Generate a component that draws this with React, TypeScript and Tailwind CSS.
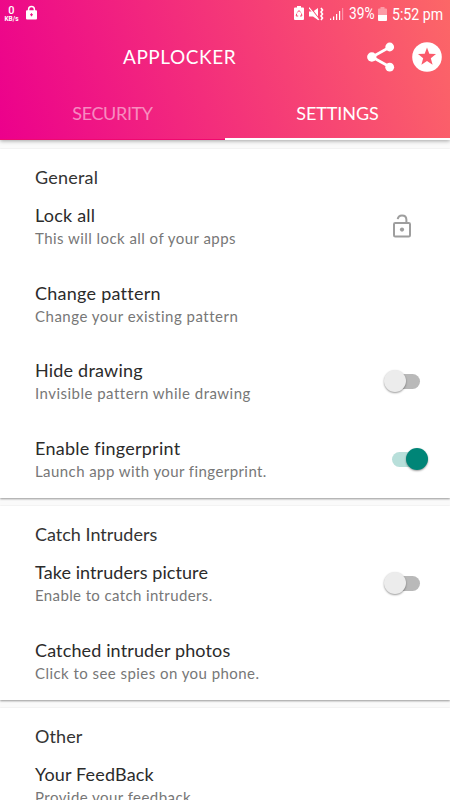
import type { ReactNode } from "react";

type Item = {
  title: string;
  titleClass: string;
  note: string;
  noteClass: string;
  control?: ReactNode;
};

function Toggle({ on = false }: { on?: boolean }) {
  return on ? (
    <span className="relative mt-px mr-[23px] block h-[15px] w-[35px] rounded-full bg-[#b8dfda]">
      <span className="absolute -top-[4px] left-[14px] size-[22px] rounded-full bg-[#008577] shadow-[0_1px_2px_rgba(0,0,0,0.4)]" />
    </span>
  ) : (
    <span className="relative mt-px mr-[30px] block h-[15px] w-[35px] rounded-full bg-[#b9b9b9]">
      <span className="absolute -top-[4px] -left-[1px] size-[22px] rounded-full bg-[#ececec] shadow-[0_1px_2px_rgba(0,0,0,0.4)]" />
    </span>
  );
}

function OpenLock() {
  return (
    <svg className="mr-[36px] mb-[2px] h-[27px] w-[24px]" viewBox="0 0 24 27" fill="none" stroke="#9e9e9e" strokeWidth="2">
      <rect x="4" y="11" width="16" height="13.5" rx="1.2" />
      <path d="M7.7 7.2C8 4.8 9.7 3.4 12 3.4c2.7 0 4.4 1.8 4.4 4.4V11" />
      <circle cx="12" cy="17.6" r="2.1" fill="#9e9e9e" stroke="none" />
    </svg>
  );
}

const general: Item[] = [
  { title: "Lock all", titleClass: "tracking-[0.2px]", note: "This will lock all of your apps", noteClass: "tracking-[0.45px]", control: <OpenLock /> },
  { title: "Change pattern", titleClass: "tracking-[0.25px]", note: "Change your existing pattern", noteClass: "tracking-[0.5px]" },
  { title: "Hide drawing", titleClass: "tracking-[0.2px]", note: "Invisible pattern while drawing", noteClass: "tracking-[0.48px]", control: <Toggle /> },
  { title: "Enable fingerprint", titleClass: "tracking-[0.25px]", note: "Launch app with your fingerprint.", noteClass: "tracking-[0.42px]", control: <Toggle on /> },
];

const intruders: Item[] = [
  { title: "Take intruders picture", titleClass: "tracking-[0.08px]", note: "Enable to catch intruders.", noteClass: "tracking-[0.38px]", control: <Toggle /> },
  { title: "Catched intruder photos", titleClass: "tracking-[0.13px]", note: "Click to see spies on you phone.", noteClass: "tracking-[0.45px]" },
];

const other: Item[] = [
  { title: "Your FeedBack", titleClass: "tracking-[0.15px]", note: "Provide your feedback", noteClass: "tracking-[0.45px]" },
];

function Section({ title, titleClass, items }: { title: string; titleClass: string; items: Item[] }) {
  return (
    <section className="bg-white shadow-[0_1px_2px_rgba(0,0,0,0.4)]">
      <h2 className="h-[38.5px] pt-[16px] pl-[35px] text-[18px] leading-[24px] text-[#333]">
        <span className={titleClass}>{title}</span>
      </h2>
      {items.map((item) => (
        <div key={item.title} className="flex h-[77.5px] items-center justify-between">
          <div className="pl-[35px]">
            <h3 className="text-[18px] leading-[24px] whitespace-nowrap text-[#2b2b2b]">
              <span className={item.titleClass}>{item.title}</span>
            </h3>
            <p className="text-[15px] leading-[22px] whitespace-nowrap text-[#777]">
              <span className={item.noteClass}>{item.note}</span>
            </p>
          </div>
          {item.control}
        </div>
      ))}
    </section>
  );
}

function StatusBar() {
  return (
    <div className="flex h-[27px] items-center justify-between pr-[8px] pl-[4px] font-['Roboto',sans-serif]">
      <div className="flex items-center gap-[7px]">
        <div className="flex w-[15px] flex-col items-center">
          <span className="text-[11px] leading-[11px] font-medium">0</span>
          <span className="text-[6.5px] leading-[7px] font-bold">KB/s</span>
        </div>
        <svg className="mb-[2px] h-[15px] w-[11px]" viewBox="0 0 11 15">
          <path d="M2.6 7V4.3a2.9 2.9 0 0 1 5.8 0V7" fill="none" stroke="#fff" strokeWidth="1.5" />
          <rect y="5.3" width="11" height="9.2" rx="1" fill="#fff" />
          <path d="M5.5 8.2v3M4 9.7h3" stroke="#ee1585" strokeWidth="1.1" />
        </svg>
      </div>
      <div className="flex items-center">
        <svg className="h-[15px] w-[10px]" viewBox="0 0 10 15">
          <path d="M3 0h4v1.5h2a1 1 0 0 1 1 1V13a1 1 0 0 1-1 1H1a1 1 0 0 1-1-1V2.500a1 1 0 0 1 1-1h2z" fill="#fff" />
          <path d="M3.300 6.500 5 4.500l1.700 2M7.500 7.500l.3 2.500H6M4.200 10H2.200l.5-2.400" fill="none" stroke="#fa4a72" strokeWidth="1" />
        </svg>
        <svg className="ml-[5px] h-[14px] w-[15px]" viewBox="0 0 15 14">
          <path d="M0 4.500h4L9 1v12L4 9.500H0z" fill="#fff" />
          <path d="M1 0l10 13" stroke="#fb4b72" strokeWidth="1.200" />
          <path d="M0 .5l10 12.500" stroke="#fff" strokeWidth="1.100" />
          <path d="M12 1l1.500 2-1.500 2 1.500 2-1.500 2 1.500 2-1.500 2" fill="none" stroke="#fff" strokeWidth="1.600" />
        </svg>
        <svg className="ml-[6px] h-[14px] w-[14px]" viewBox="0 0 14 14" fill="#fff">
          <rect x="0" y="11.500" width="1.200" height="1.500" />
          <rect x="3" y="9.500" width="1.200" height="3.500" />
          <rect x="6" y="7" width="1.200" height="6" />
          <rect x="9" y="4" width="1.200" height="9" />
          <rect x="12" y="1" width="1.200" height="12" opacity=".4" />
        </svg>
        <span className="ml-[5px] w-[26px] text-[16px] leading-[20px] whitespace-nowrap">
          <span className="inline-block origin-left scale-x-[.86]">39%</span>
        </span>
        <svg className="mr-px ml-[3px] h-[14px] w-[9px]" viewBox="0 0 9 14" fill="#fff">
          <path d="M2.500 0h4v1.500H8a1 1 0 0 1 1 1V8H0V2.500a1 1 0 0 1 1-1h1.500z" opacity=".4" />
          <path d="M0 8h9v5a1 1 0 0 1-1 1H1a1 1 0 0 1-1-1z" />
        </svg>
        <span className="ml-[4px] w-[50px] text-[17px] leading-[20px] whitespace-nowrap">
          <span className="inline-block origin-left scale-x-[.83]">5:52 pm</span>
        </span>
      </div>
    </div>
  );
}

export default function App() {
  return (
    <div className="h-[800px] w-[450px] overflow-hidden bg-[#fafafa] font-['Lato',sans-serif]">
      <header className="relative flex h-[140px] flex-col bg-[linear-gradient(72.7deg,#ec008c,#fc6767)] text-white shadow-[0_1px_4px_rgba(0,0,0,0.35)]">
        <StatusBar />
        <div className="flex h-[60px] items-center pr-[8px] pl-[123px]">
          <h1 className="flex-1 text-[19px] leading-[24px]">
            <span className="tracking-[0.55px]">APPLOCKER</span>
          </h1>
          <svg className="h-[30px] w-[28px]" viewBox="0 0 28 30" fill="#fff">
            <path d="M23 5 5 15l18 10" fill="none" stroke="#fff" strokeWidth="2.700" />
            <circle cx="22.700" cy="5" r="4.400" />
            <circle cx="4.800" cy="15" r="4.700" />
            <circle cx="22.700" cy="25.200" r="4.400" />
          </svg>
          <svg className="ml-[17px] size-[30px]" viewBox="0 0 30 30">
            <circle cx="15" cy="15" r="14.800" fill="#fff" />
            <path d="m15 5.500 2.300 6.300 6.700.3-5.200 4.200 1.800 6.500-5.600-3.700-5.600 3.700 1.800-6.500L6 12.100l6.700-.3z" fill="#fb5a6b" />
          </svg>
        </div>
        <nav className="grid h-[53px] grid-cols-2 text-center text-[18px] leading-[53px]">
          <div className="h-[53px] border-b border-[#f0086f] text-white/50">
            <span className="tracking-[-0.35px]">SECURITY</span>
          </div>
          <div className="h-[53px] border-b-2 border-white">
            <span className="tracking-[-0.1px]">SETTINGS</span>
          </div>
        </nav>
      </header>
      <main className="flex flex-col gap-[8.5px] pt-[9px]">
        <Section title="General" titleClass="tracking-[0.2px]" items={general} />
        <Section title="Catch Intruders" titleClass="tracking-[0px]" items={intruders} />
        <Section title="Other" titleClass="tracking-[0.1px]" items={other} />
      </main>
    </div>
  );
}
